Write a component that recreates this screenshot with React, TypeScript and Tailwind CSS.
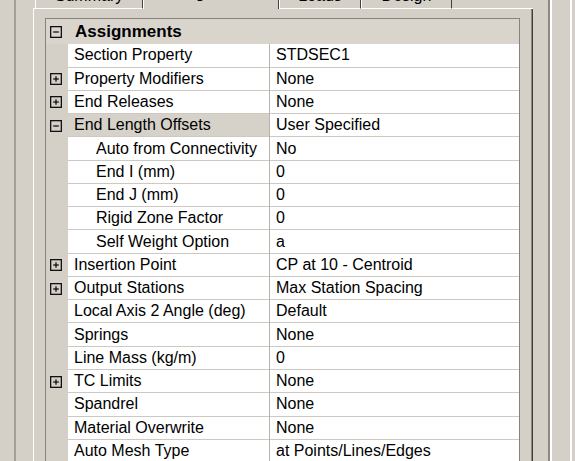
import React from 'react';

type Row = {
  name: string;
  value: string;
  toggle?: 'plus' | 'minus';
  child?: boolean;
  selected?: boolean;
};

const rows: Row[] = [
  { name: 'Section Property', value: 'STDSEC1' },
  { name: 'Property Modifiers', value: 'None', toggle: 'plus' },
  { name: 'End Releases', value: 'None', toggle: 'plus' },
  { name: 'End Length Offsets', value: 'User Specified', toggle: 'minus', selected: true },
  { name: 'Auto from Connectivity', value: 'No', child: true },
  { name: 'End I (mm)', value: '0', child: true },
  { name: 'End J (mm)', value: '0', child: true },
  { name: 'Rigid Zone Factor', value: '0', child: true },
  { name: 'Self Weight Option', value: 'a', child: true },
  { name: 'Insertion Point', value: 'CP at 10 - Centroid', toggle: 'plus' },
  { name: 'Output Stations', value: 'Max Station Spacing', toggle: 'plus' },
  { name: 'Local Axis 2 Angle (deg)', value: 'Default' },
  { name: 'Springs', value: 'None' },
  { name: 'Line Mass (kg/m)', value: '0' },
  { name: 'TC Limits', value: 'None', toggle: 'plus' },
  { name: 'Spandrel', value: 'None' },
  { name: 'Material Overwrite', value: 'None' },
  { name: 'Auto Mesh Type', value: 'at Points/Lines/Edges' },
];

function ToggleBox({ kind }: { kind: 'plus' | 'minus' }) {
  return (
    <svg width="12" height="12" viewBox="0 0 12 12" className="block shrink-0">
      <rect x="0.65" y="0.65" width="10.7" height="10.7" fill="none" stroke="#111" strokeWidth="1.3" />
      <line x1="3.2" y1="6" x2="8.8" y2="6" stroke="#111" strokeWidth="1.3" />
      {kind === 'plus' && <line x1="6" y1="3.2" x2="6" y2="8.8" stroke="#111" strokeWidth="1.3" />}
    </svg>
  );
}

function Tab({ label, width, selected = false }: { label: string; width: string; selected?: boolean }) {
  return (
    <div
      className={`${width} h-full shrink-0 flex justify-center border-l border-l-white border-r border-r-[#404040] ${
        selected ? 'leading-[13px] pt-0' : 'border-b border-b-white leading-[16px] pt-[2px]'
      }`}
    >
      <span className="text-[16px] text-black whitespace-nowrap">{label}</span>
    </div>
  );
}

function PropertyRow({ row }: { row: Row }) {
  return (
    <div className="flex h-[23.27px] shrink-0">
      <div className="w-[22px] shrink-0 flex items-center pl-[4px]">
        {row.toggle && <ToggleBox kind={row.toggle} />}
      </div>
      <div
        className={`w-[201px] shrink-0 flex items-center border-b border-[#cdc9c1] whitespace-nowrap ${
          row.child ? 'pl-[28px]' : 'pl-[6px]'
        } ${row.selected ? 'bg-[#d6d2ca]' : 'bg-white'}`}
      >
        {row.name}
      </div>
      <div className="w-px shrink-0 bg-[#b8b4ac]" />
      <div className="flex-1 flex items-center bg-white border-b border-[#cdc9c1] pl-[6px] whitespace-nowrap">
        {row.value}
      </div>
    </div>
  );
}

export default function App() {
  return (
    <div
      className="w-[575px] h-[461px] overflow-hidden bg-[#d4d0c8] flex text-black text-[16px]"
      style={{ fontFamily: '"Liberation Sans", Arial, sans-serif' }}
    >
      {/* left edge */}
      <div className="w-[14px] shrink-0" />
      <div className="w-[2px] shrink-0 bg-[#a4a098]" />
      <div className="w-[17px] shrink-0" />

      {/* tab control */}
      <div className="w-[500px] shrink-0 flex flex-col">
        <div className="h-[23px] -mt-[14px] flex shrink-0">
          <div className="w-[2px] shrink-0 border-b border-b-white" />
          <Tab label="Summary" width="w-[108px]" />
          <Tab label="Assignments" width="w-[136px]" selected />
          <Tab label="Loads" width="w-[82px]" />
          <Tab label="Design" width="w-[91px]" />
          <div className="flex-1 border-b border-b-white" />
        </div>

        <div className="flex-1 flex border-l border-l-white border-r border-r-[#404040]">
          <div className="flex-1 flex pt-[9px] pl-[11px] pr-[11px] border-r border-r-[#8a8680]">
            <div className="flex-1 flex flex-col border border-[#86827c] border-b-0 overflow-hidden">
              <div className="h-[25.3px] shrink-0 flex items-center bg-[#d9d5cd]">
                <div className="w-[22px] shrink-0 flex items-center pl-[4px]">
                  <ToggleBox kind="minus" />
                </div>
                <span className="pl-[7px] font-bold text-[17px] whitespace-nowrap">Assignments</span>
              </div>
              {rows.map((row) => (
                <PropertyRow key={row.name} row={row} />
              ))}
            </div>
          </div>
        </div>
      </div>

      {/* right edge */}
      <div className="w-[15px] shrink-0" />
      <div className="w-[2px] shrink-0 bg-[#8c8882]" />
      <div className="w-[2px] shrink-0 bg-white" />
      <div className="w-[18px] shrink-0" />
      <div className="w-[2px] shrink-0 bg-white" />
      <div className="flex-1" />
    </div>
  );
}
